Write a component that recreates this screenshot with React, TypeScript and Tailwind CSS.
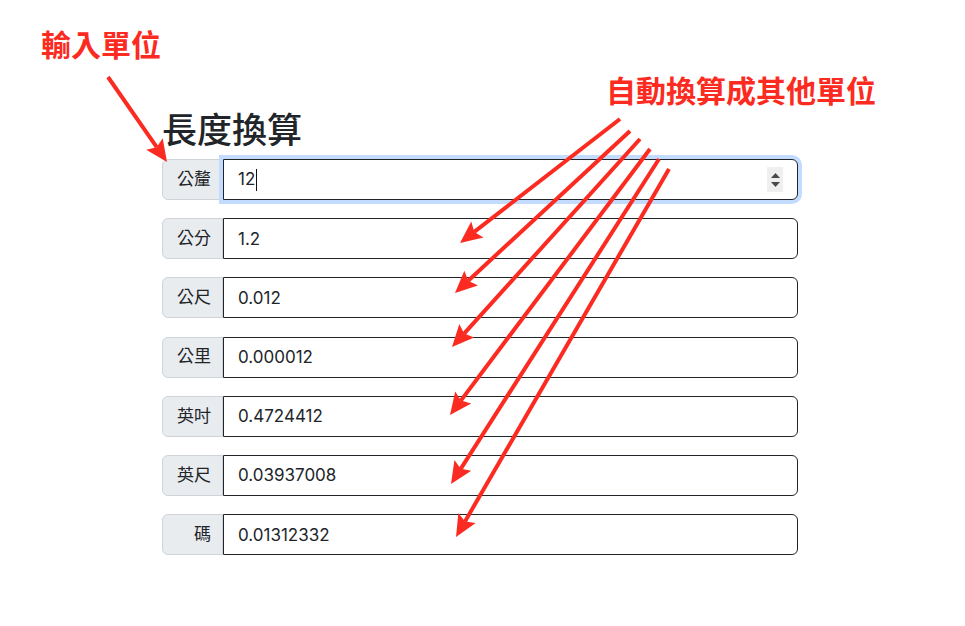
import React from 'react'

const RED = '#fc2b21'

const rows = [
  { unit: '公分', value: '1.2' },
  { unit: '公尺', value: '0.012' },
  { unit: '公里', value: '0.000012' },
  { unit: '英吋', value: '0.4724412' },
  { unit: '英尺', value: '0.03937008' },
  { unit: '碼', value: '0.01312332' },
]

// start -> tip, in page pixels
const arrows: [number, number, number, number][] = [
  [108, 77, 167, 162],
  [620, 119, 460, 243],
  [630, 131, 455, 293],
  [640, 139, 452, 347],
  [650, 149, 450, 415],
  [659, 159, 451, 484],
  [669, 169, 456, 537],
]

function Arrow({ a }: { a: [number, number, number, number] }) {
  const [x1, y1, x2, y2] = a
  const len = Math.hypot(x2 - x1, y2 - y1)
  const dx = (x2 - x1) / len
  const dy = (y2 - y1) / len
  const L = 22
  const W = 10
  const bx = x2 - dx * L
  const by = y2 - dy * L
  const nx = -dy
  const ny = dx
  const mx = x2 - dx * L * 0.82
  const my = y2 - dy * L * 0.82
  const pts = [
    [x2, y2],
    [bx + nx * W, by + ny * W],
    [mx, my],
    [bx - nx * W, by - ny * W],
  ]
    .map(p => p.join(','))
    .join(' ')
  return (
    <g>
      <line x1={x1} y1={y1} x2={mx} y2={my} stroke={RED} strokeWidth={4} strokeLinecap="butt" />
      <polygon points={pts} fill={RED} />
    </g>
  )
}

function Label({ children }: { children: React.ReactNode }) {
  return (
    <div className="flex h-[41px] w-[61px] shrink-0 items-center justify-end rounded-l-[6px] border border-[#ced4da] bg-[#e9ecef] pr-[11px] text-[17px] text-[#212529]">
      {children}
    </div>
  )
}

export default function App() {
  return (
    <div
      className="relative h-[626px] w-[965px] overflow-hidden bg-white"
      style={{ fontFamily: 'Inter, "Noto Sans CJK TC", sans-serif' }}
    >
      <div className="pl-[162px] pt-[109px]">
        <h1 className="mb-[8px] text-[35px] font-medium leading-[42px] text-[#212529]">長度換算</h1>
        <div className="flex w-[636px] flex-col gap-[18.2px]">
          <div className="flex">
            <Label>公釐</Label>
            <div className="relative flex h-[41px] flex-1 items-center rounded-r-[6px] border border-[#212529] bg-white pl-[14px] text-[17px] text-[#212529] shadow-[0_0_0_4px_#c3dbfe]">
              <span>12</span>
              <span className="ml-[1px] h-[22px] w-px bg-[#111]" />
              <div className="absolute right-[14px] top-[7px] flex h-[25px] w-[16px] flex-col items-center justify-center gap-[4px] bg-[#efefef]">
                <svg width="9" height="5" viewBox="0 0 9 5">
                  <polygon points="4.5,0 9,5 0,5" fill="#4a4a4a" />
                </svg>
                <svg width="9" height="5" viewBox="0 0 9 5">
                  <polygon points="0,0 9,0 4.5,5" fill="#4a4a4a" />
                </svg>
              </div>
            </div>
          </div>
          {rows.map(r => (
            <div key={r.unit} className="flex">
              <Label>{r.unit}</Label>
              <input
                readOnly
                value={r.value}
                className="h-[41px] flex-1 rounded-r-[6px] border border-[#212529] bg-white pl-[14px] text-[17px] text-[#212529] outline-none"
              />
            </div>
          ))}
        </div>
      </div>

      <div className="absolute left-[41px] top-[30px] text-[30px] font-bold leading-[30px]" style={{ color: RED }}>
        輸入單位
      </div>
      <div className="absolute left-[606px] top-[76px] text-[30px] font-bold leading-[30px]" style={{ color: RED }}>
        自動換算成其他單位
      </div>

      <svg className="pointer-events-none absolute left-0 top-0" width="965" height="626">
        {arrows.map((a, i) => (
          <Arrow key={i} a={a} />
        ))}
      </svg>
    </div>
  )
}
